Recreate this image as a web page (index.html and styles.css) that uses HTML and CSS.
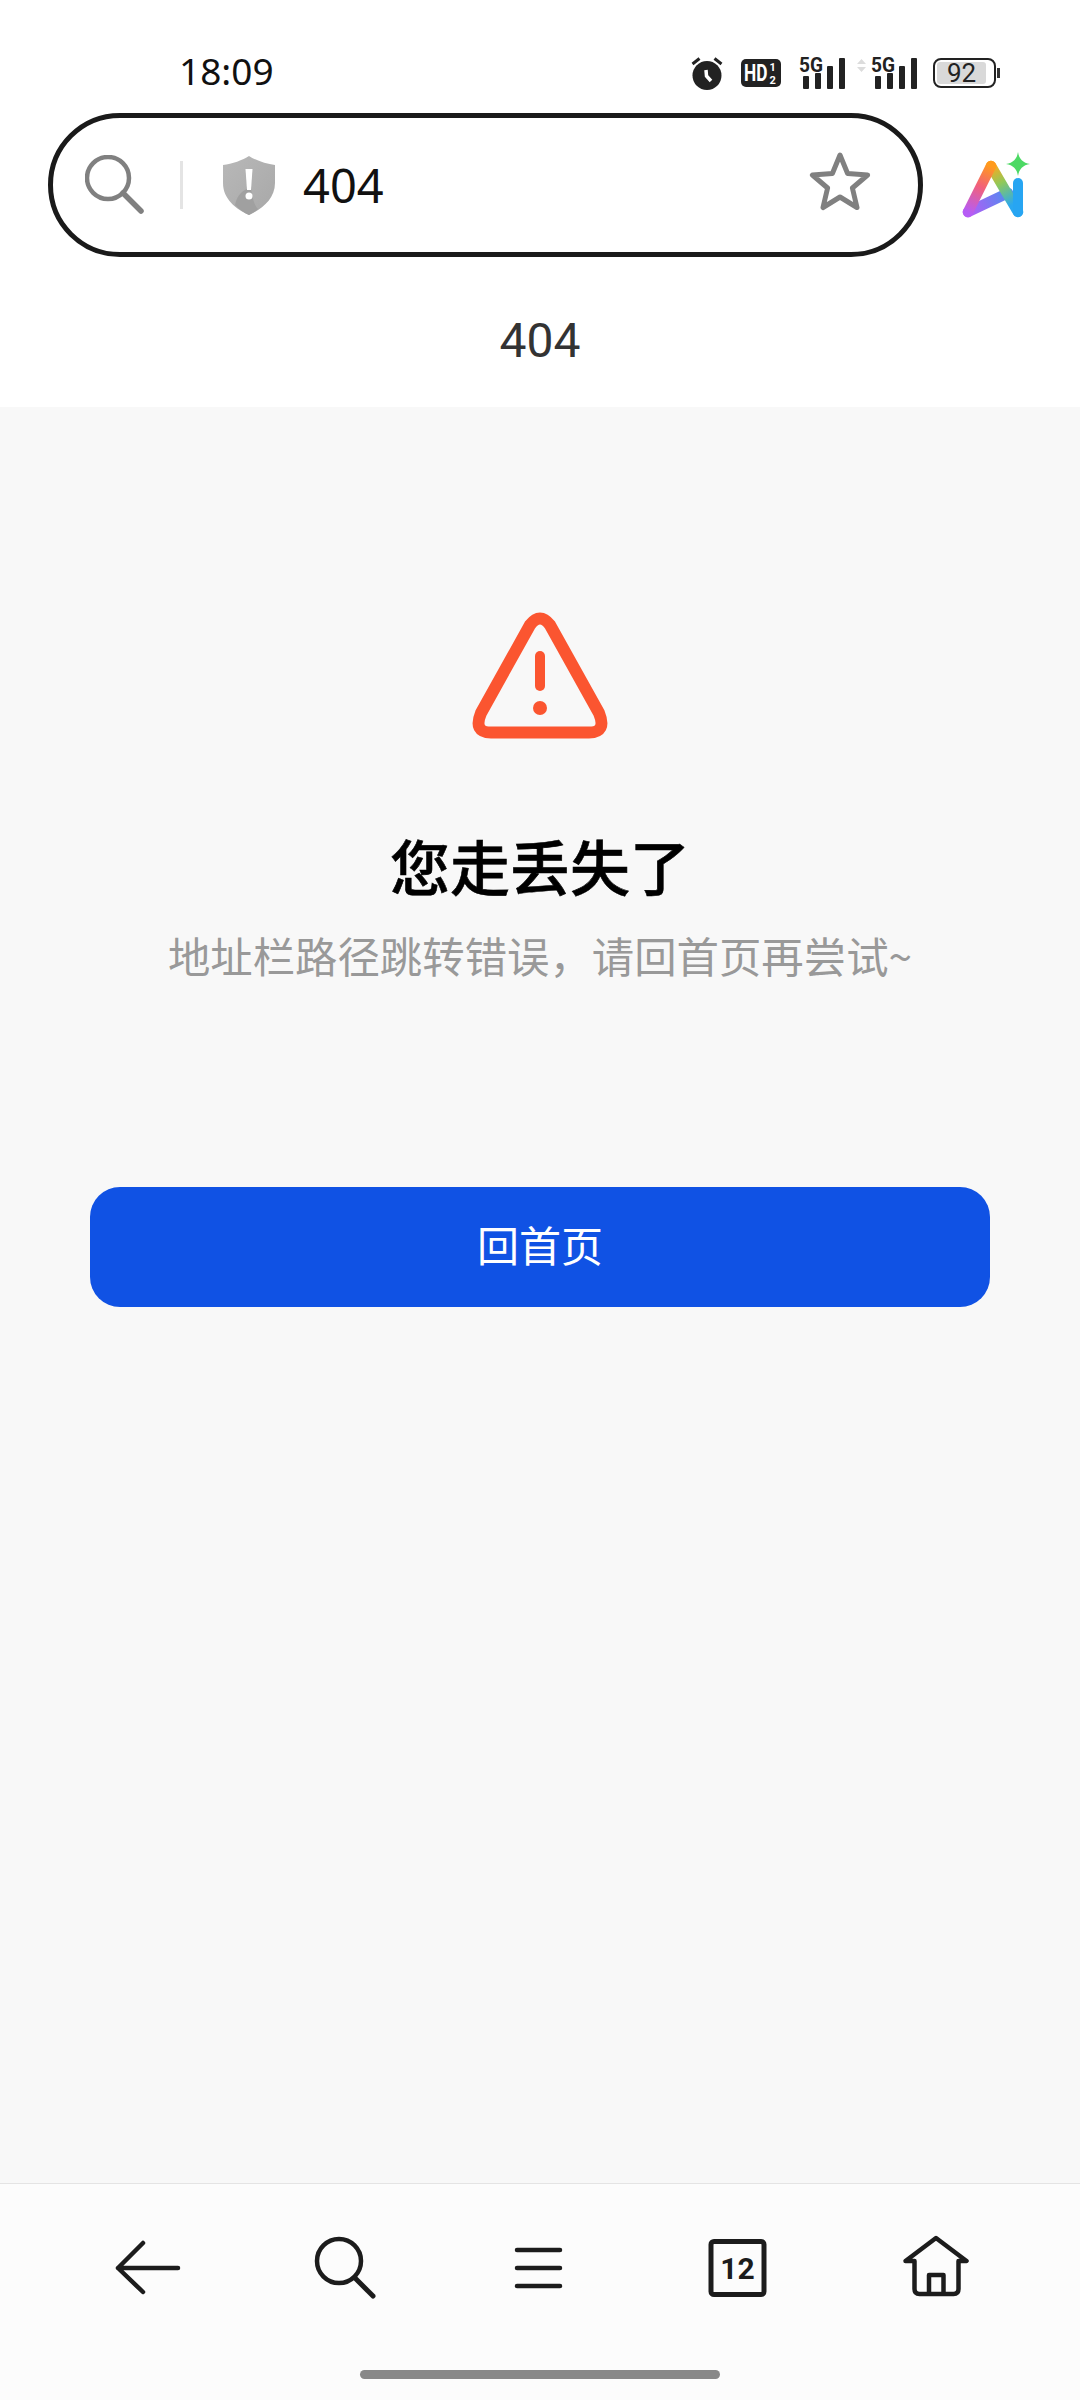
FILE: index.html
```html
<!DOCTYPE html>
<html lang="zh-CN">
<head>
    <meta charset="UTF-8">
    <meta name="viewport" content="width=device-width, initial-scale=1.0">
    <title>404</title>
    <link rel="stylesheet" href="styles.css">
</head>
<body>
    <div class="phone">
        <!-- 状态栏 -->
        <div class="status-bar">
            <span class="clock">18:09</span>
            <div class="status-icons">
                <svg class="icon-alarm" width="32" height="36" viewBox="0 0 32 36">
                    <circle cx="16" cy="20.5" r="14.5" fill="#222"/>
                    <path d="M1.5 9 L8.5 3.5 M30.5 9 L23.5 3.5" stroke="#222" stroke-width="3" fill="none"/>
                    <path d="M15 15 L15.5 21 L20 26" stroke="#fff" stroke-width="3.5" fill="none"/>
                </svg>
                <svg class="icon-hd" width="40" height="28" viewBox="0 0 40 28">
                    <rect width="40" height="28" rx="5" fill="#222"/>
                    <text class="hd-text" transform="translate(3 22) scale(0.72 1)">HD</text>
                    <text class="hd-small" x="28.500" y="11.500">1</text>
                    <text class="hd-small" x="28.500" y="24.500">2</text>
                </svg>
                <svg class="icon-signal" width="46" height="38" viewBox="0 -6 46 38">
                    <text class="net-text" x="0" y="15" textLength="24" lengthAdjust="spacingAndGlyphs">5G</text>
                    <g fill="#222">
                        <rect x="4" y="19" width="6" height="13" rx="1"/>
                        <rect x="16" y="16" width="6" height="16" rx="1"/>
                        <rect x="28" y="9" width="6" height="23" rx="1"/>
                        <rect x="40" y="1" width="6" height="31" rx="1"/>
                    </g>
                </svg>
                <svg class="icon-signal icon-signal-two" width="60" height="38" viewBox="0 -6 60 38">
                    <path d="M4.500 2 L9 7 H0 Z M4.500 15 L9 10 H0 Z" fill="#dcdcdc"/>
                    <text class="net-text" x="14" y="15" textLength="24" lengthAdjust="spacingAndGlyphs">5G</text>
                    <g fill="#222">
                        <rect x="18" y="19" width="6" height="13" rx="1"/>
                        <rect x="30" y="16" width="6" height="16" rx="1"/>
                        <rect x="42" y="9" width="6" height="23" rx="1"/>
                        <rect x="54" y="1" width="6" height="31" rx="1"/>
                    </g>
                </svg>
                <div class="battery">
                    <div class="battery-body"><span class="battery-level">92</span></div>
                    <div class="battery-cap"></div>
                </div>
            </div>
        </div>

        <!-- 地址栏 -->
        <div class="address-row">
            <div class="address-bar">
                <svg class="bar-search" width="60" height="60" viewBox="0 0 60 60">
                    <circle cx="23" cy="23" r="21" fill="none" stroke="#808080" stroke-width="4.500"/>
                    <path d="M38 38 L56 56" stroke="#808080" stroke-width="5.500" stroke-linecap="round"/>
                </svg>
                <span class="bar-divider"></span>
                <svg class="bar-shield" width="54" height="60" viewBox="0 0 54 60">
                    <defs>
                        <linearGradient id="shieldFill" x1="0" y1="0" x2="1" y2="1">
                            <stop offset="0" stop-color="#b8b8b8"/>
                            <stop offset="1" stop-color="#a8a8a8"/>
                        </linearGradient>
                    </defs>
                    <path d="M27 1 C33 5 44 9 53 10 V28 C53 44 40 54 27 60 C14 54 1 44 1 28 V10 C10 9 21 5 27 1Z" fill="url(#shieldFill)"/>
                    <path d="M13 50 C15 40 21 34 29 33 C30 42 32 50 36 54 C33 57 30 58 27 60 C22 58 17 54 13 50Z" fill="#a0a0a0"/>
                    <path d="M23.500 14 H30.500 L29 35 H25 Z" fill="#fff"/>
                    <circle cx="27" cy="41" r="3.500" fill="#fff"/>
                </svg>
                <span class="bar-url">404</span>
                <svg class="bar-star" width="62" height="60" viewBox="0 0 62 60">
                    <path d="M31 3 L38.600 21.500 L58.600 23 L43.400 36 L48 55.500 L31 45 L14 55.500 L18.600 36 L3.400 23 L23.400 21.500 Z" fill="none" stroke="#808080" stroke-width="5" stroke-linejoin="round"/>
                </svg>
            </div>
            <svg class="ai-logo" width="70" height="70" viewBox="0 0 70 70">
                <defs>
                    <linearGradient id="aiLeft" gradientUnits="userSpaceOnUse" x1="6" y1="63" x2="29" y2="17">
                        <stop offset="0" stop-color="#b65cf5"/>
                        <stop offset="0.55" stop-color="#f2607a"/>
                        <stop offset="1" stop-color="#ff9a1c"/>
                    </linearGradient>
                    <linearGradient id="aiRight" gradientUnits="userSpaceOnUse" x1="29" y1="17" x2="50" y2="56">
                        <stop offset="0" stop-color="#ffa81c"/>
                        <stop offset="0.45" stop-color="#8fc95a"/>
                        <stop offset="1" stop-color="#2aa8f0"/>
                    </linearGradient>
                    <linearGradient id="aiCross" gradientUnits="userSpaceOnUse" x1="6" y1="63" x2="46" y2="44">
                        <stop offset="0" stop-color="#b65cf5"/>
                        <stop offset="1" stop-color="#4f8cf0"/>
                    </linearGradient>
                </defs>
                <path d="M6 63 L46 44" stroke="url(#aiCross)" stroke-width="10.500" stroke-linecap="round" fill="none"/>
                <path d="M29 17 L56 63" stroke="url(#aiRight)" stroke-width="10.500" stroke-linecap="round" fill="none"/>
                <path d="M6 63 L29 17" stroke="url(#aiLeft)" stroke-width="10.500" stroke-linecap="round" fill="none"/>
                <path d="M56 34 V63" stroke="#27a5f2" stroke-width="10" stroke-linecap="round" fill="none"/>
                <path d="M56 3 C57 10 61 14 68 15 C61 16 57 20 56 27 C55 20 51 16 44 15 C51 14 55 10 56 3Z" fill="#4cd964"/>
            </svg>
        </div>

        <div class="page-title">404</div>

        <!-- 错误内容 -->
        <main class="error-page">
            <svg class="error-icon" width="136" height="127" viewBox="0 0 136 127">
                <path d="M58 13 Q68 0 78 13 L127 101 Q135 120.500 117 120.500 L19 120.500 Q1 120.500 9 101 Z" fill="none" stroke="#fb5530" stroke-width="12" stroke-linejoin="round"/>
                <path d="M68 44 V74" stroke="#fb5530" stroke-width="10" stroke-linecap="round"/>
                <circle cx="68" cy="96" r="7" fill="#fb5530"/>
            </svg>
            <h1 class="error-title">您走丢失了</h1>
            <p class="error-text">地址栏路径跳转错误，请回首页再尝试~</p>
            <button class="home-button">回首页</button>
        </main>

        <!-- 底部工具栏 -->
        <nav class="toolbar">
            <div class="toolbar-icons">
                <svg class="tool-icon" viewBox="0 0 72 72">
                    <path d="M30 11 L5 36 L30 60 M5 36 H65" fill="none" stroke="#1c1c1c" stroke-width="4.500" stroke-linecap="round" stroke-linejoin="round"/>
                </svg>
                <svg class="tool-icon" viewBox="0 0 72 72">
                    <circle cx="29" cy="29" r="22" fill="none" stroke="#1c1c1c" stroke-width="4.500"/>
                    <path d="M45 46 L63 64" stroke="#1c1c1c" stroke-width="5" stroke-linecap="round"/>
                </svg>
                <svg class="tool-icon" viewBox="0 0 72 72">
                    <path d="M10 18 H53 M10 36 H53 M10 54 H53" stroke="#1c1c1c" stroke-width="4.500" stroke-linecap="round"/>
                </svg>
                <svg class="tool-icon" viewBox="0 0 72 72">
                    <rect x="7" y="9.500" width="53" height="53" rx="3" fill="none" stroke="#1c1c1c" stroke-width="5"/>
                    <text class="tab-count" x="33.500" y="47" text-anchor="middle">12</text>
                </svg>
                <svg class="tool-icon" viewBox="0 0 72 72">
                    <path d="M13.500 29 H4.500 L35 6 L65.500 29 H57.500 V57 Q57.500 62 52.500 62 H18.500 Q13.500 62 13.500 57 Z M28 62 V43 H42.500 V62" fill="none" stroke="#1c1c1c" stroke-width="4.500" stroke-linejoin="round"/>
                </svg>
            </div>
            <div class="home-indicator"></div>
        </nav>
    </div>
</body>
</html>
```

FILE: styles.css
```css
/* 全体 */
* {
    margin: 0;
    padding: 0;
    box-sizing: border-box;
}

body {
    font-family: "Noto Sans", "Noto Sans CJK SC", sans-serif;
    color: #111;
    background-color: #fff;
}

.phone {
    width: 1080px;
    height: 2400px;
    display: flex;
    flex-direction: column;
    overflow: hidden;
}

/* 状态栏 */
.status-bar {
    height: 113px;
    padding: 33px 80px 0 179px;
    display: flex;
    align-items: center;
    justify-content: space-between;
    flex-shrink: 0;
}

.clock {
    margin-bottom: 6px;
    font-size: 37px;
    line-height: 1;
    color: #111;
}

.status-icons {
    display: flex;
    align-items: center;
    gap: 18px;
}

.hd-text {
    font-family: Roboto, sans-serif;
    font-size: 24px;
    font-weight: 700;
    fill: #fff;
}

.hd-small {
    font-family: Roboto, sans-serif;
    font-size: 11px;
    font-weight: 700;
    fill: #fff;
}

.net-text {
    font-family: Roboto, sans-serif;
    font-size: 20px;
    font-weight: 700;
    fill: #222;
}

/* 信号图标顶部留出 5G 文字的位置 */
.icon-signal {
    margin-top: -6px;
}

.icon-signal-two {
    margin-left: -6px;
}

.battery {
    display: flex;
    align-items: center;
    margin-left: -2px;
}

.battery-body {
    width: 63px;
    height: 30px;
    padding: 2px;
    border: 2.5px solid #222;
    border-radius: 8px;
}

.battery-level {
    display: block;
    width: 49px;
    height: 100%;
    border-radius: 3px;
    background-color: #d9d9d9;
    font-family: Roboto, sans-serif;
    font-size: 26px;
    line-height: 22px;
    text-align: center;
    color: #222;
}

.battery-cap {
    width: 3px;
    height: 10px;
    margin-left: 1px;
    background-color: #333;
}

/* 地址栏 */
.address-row {
    height: 144px;
    padding-left: 48px;
    display: flex;
    align-items: center;
    flex-shrink: 0;
}

.address-bar {
    width: 875px;
    height: 144px;
    padding: 0 47px 0 32px;
    display: flex;
    align-items: center;
    border: 5.5px solid #1a1a1a;
    border-radius: 72px;
    background-color: #fff;
}

.bar-divider {
    width: 3px;
    height: 48px;
    margin-left: 35px;
    background-color: #e4e4e4;
}

.bar-shield {
    margin-left: 39px;
}

.bar-url {
    margin-left: 27px;
    font-size: 47px;
    line-height: 1;
    color: #111;
}

.bar-star {
    margin-left: auto;
    margin-bottom: 6px;
}

.ai-logo {
    margin-left: 39px;
    margin-top: -2px;
}

.page-title {
    height: 150px;
    padding-top: 54px;
    font-family: Roboto, sans-serif;
    font-size: 48px;
    line-height: 60px;
    text-align: center;
    color: #333;
    flex-shrink: 0;
}

/* 错误内容 */
.error-page {
    flex: 1;
    padding-top: 205px;
    display: flex;
    flex-direction: column;
    align-items: center;
    background-color: #f8f8f8;
}

.error-icon {
    flex-shrink: 0;
}

.error-title {
    margin-top: 96px;
    font-family: "Noto Sans CJK SC", sans-serif;
    font-size: 60px;
    font-weight: 500;
    line-height: 60px;
    color: #000;
    -webkit-text-stroke: 0.6px #000;
}

.error-text {
    margin-top: 39px;
    font-family: "Noto Sans CJK SC", sans-serif;
    font-size: 42.4px;
    line-height: 42px;
    color: #999;
}

.home-button {
    width: 900px;
    height: 120px;
    margin-top: 211px;
    padding-bottom: 8px;
    border: none;
    border-radius: 30px;
    background-color: #1052e4;
    font-family: "Noto Sans CJK SC", sans-serif;
    font-size: 42px;
    color: #fff;
}

/* 底部工具栏 */
.toolbar {
    height: 217px;
    padding-top: 48px;
    display: flex;
    flex-direction: column;
    border-top: 1px solid #e4e4e4;
    background-color: #fcfcfc;
    flex-shrink: 0;
}

.toolbar-icons {
    display: grid;
    grid-template-columns: repeat(5, 197px);
    padding-left: 50px;
    justify-items: center;
}

.tool-icon {
    width: 72px;
    height: 72px;
}

.tab-count {
    font-family: Roboto, sans-serif;
    font-size: 30px;
    font-weight: 700;
    fill: #1c1c1c;
}

.home-indicator {
    width: 360px;
    height: 9px;
    margin: auto auto 21px;
    border-radius: 5px;
    background-color: #888;
}
```
